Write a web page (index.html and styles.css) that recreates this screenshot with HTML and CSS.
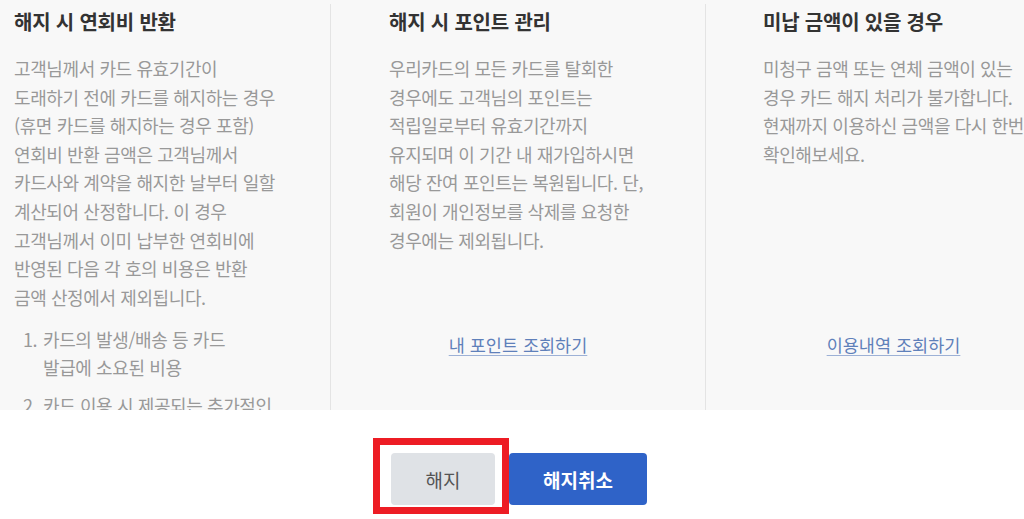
FILE: index.html
```html
<!DOCTYPE html>
<html lang="ko">
<head>
<meta charset="utf-8">
<title>카드 해지</title>
<link rel="stylesheet" href="styles.css">
</head>
<body>
<div class="page">
  <section class="panel">
    <div class="cols">
      <div class="col">
        <h2 class="title">해지 시 연회비 반환</h2>
        <p class="body">고객님께서 카드 유효기간이<br>도래하기 전에 카드를 해지하는 경우<br>(휴면 카드를 해지하는 경우 포함)<br>연회비 반환 금액은 고객님께서<br>카드사와 계약을 해지한 날부터 일할<br>계산되어 산정합니다. 이 경우<br>고객님께서 이미 납부한 연회비에<br>반영된 다음 각 호의 비용은 반환<br>금액 산정에서 제외됩니다.</p>
        <ol class="list">
          <li><span class="num">1.</span><span class="txt">카드의 발생/배송 등 카드<br>발급에 소요된 비용</span></li>
          <li><span class="num">2.</span><span class="txt">카드 이용 시 제공되는 추가적인</span></li>
        </ol>
      </div>
      <div class="col">
        <h2 class="title">해지 시 포인트 관리</h2>
        <p class="body fixed">우리카드의 모든 카드를 탈회한<br>경우에도 고객님의 포인트는<br>적립일로부터 유효기간까지<br>유지되며 이 기간 내 재가입하시면<br>해당 잔여 포인트는 복원됩니다. 단,<br>회원이 개인정보를 삭제를 요청한<br>경우에는 제외됩니다.</p>
        <div class="linkrow"><a class="link" href="#">내 포인트 조회하기</a></div>
      </div>
      <div class="col col3">
        <h2 class="title">미납 금액이 있을 경우</h2>
        <p class="body fixed">미청구 금액 또는 연체 금액이 있는<br>경우 카드 해지 처리가 불가합니다.<br>현재까지 이용하신 금액을 다시 한번<br>확인해보세요.</p>
        <div class="linkrow"><a class="link" href="#">이용내역 조회하기</a></div>
      </div>
    </div>
  </section>
  <div class="actions">
    <div class="btn-wrap">
      <button class="btn btn-gray" type="button">해지</button>
      <span class="highlight"></span>
    </div>
    <button class="btn btn-blue" type="button">해지취소</button>
  </div>
</div>
</body>
</html>
```

FILE: styles.css
```css
html, body {
  margin: 0;
  padding: 0;
  background: #ffffff;
}
body {
  width: 1024px;
  height: 519px;
  overflow: hidden;
  font-family: "Noto Sans CJK KR", "Noto Sans", sans-serif;
}
.page {
  width: 1024px;
}
.panel {
  height: 410px;
  background: #f8f8f8;
  overflow: hidden;
}
.cols {
  display: flex;
  margin-left: -44px;
  padding-top: 4px;
}
.col {
  flex: 0 0 375px;
  box-sizing: border-box;
  height: 406px;
  padding-left: 58px;
  border-right: 1px solid #e4e4e4;
  white-space: nowrap;
}
.col3 {
  padding-left: 57px;
  border-right: none;
}
.title {
  margin: 0;
  font-size: 20px;
  line-height: 28px;
  padding-top: 4px;
  font-weight: 700;
  color: #333333;
  letter-spacing: -0.2px;
}
.body {
  margin: 18px 0 0;
  font-size: 18px;
  line-height: 28.6px;
  color: #999999;
  letter-spacing: -0.4px;
}
.fixed {
  height: 277px;
}
.list {
  list-style: none;
  margin: 15px 0 0;
  padding: 0 0 0 9px;
  font-size: 18px;
  line-height: 27.5px;
  color: #999999;
  letter-spacing: -0.4px;
}
.list li {
  display: flex;
  margin-bottom: 11px;
}
.num {
  flex: 0 0 20px;
}
.linkrow {
  display: flex;
  justify-content: center;
  margin-left: -58px;
  line-height: 28px;
}
.col3 .linkrow {
  margin-left: -57px;
}
.link {
  font-size: 17.5px;
  color: #5f80ba;
  text-decoration: underline;
  text-decoration-color: #9db1d6;
  text-underline-offset: 3px;
  letter-spacing: 0;
}
.actions {
  display: flex;
  justify-content: center;
  align-items: flex-start;
  gap: 14px;
  padding-top: 43px;
  padding-left: 14px;
}
.btn-wrap {
  position: relative;
  display: flex;
}
.btn {
  height: 52px;
  border: none;
  border-radius: 4px;
  font-family: "Noto Sans CJK KR", "Noto Sans", sans-serif;
  font-size: 19px;
  padding: 0;
  cursor: pointer;
}
.btn-gray {
  width: 104px;
  background: #dfe2e6;
  color: #555555;
}
.btn-blue {
  width: 138px;
  background: #2f63c8;
  color: #ffffff;
  font-weight: 700;
}
.highlight {
  position: absolute;
  left: -18px;
  top: -15px;
  width: 136px;
  height: 76px;
  box-sizing: border-box;
  border: 7px solid #ed1c24;
  pointer-events: none;
}
```
